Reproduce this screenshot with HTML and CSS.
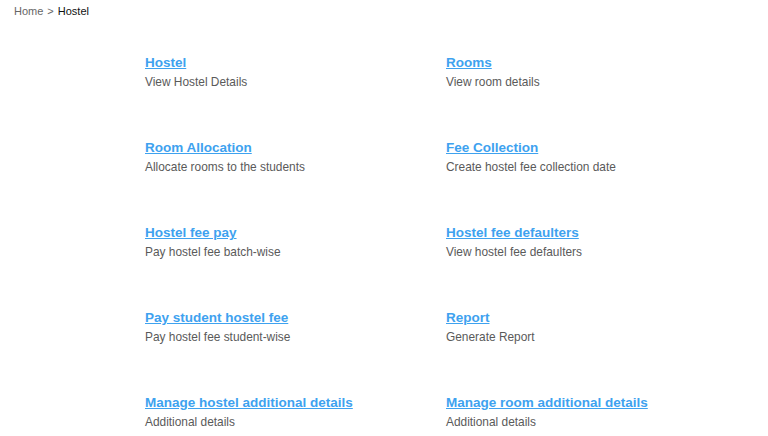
FILE: index.html
```html
<!DOCTYPE html>
<html>
<head>
<meta charset="utf-8">
<link rel="stylesheet" href="styles.css">
</head>
<body>
<div class="breadcrumb"><span class="crumb">Home</span><span class="sep">&gt;</span><span class="current">Hostel</span></div>
<div class="grid">
  <div class="item"><a class="title" href="#">Hostel</a><div class="desc">View Hostel Details</div></div>
  <div class="item"><a class="title" href="#">Rooms</a><div class="desc">View room details</div></div>
  <div class="item"><a class="title" href="#">Room Allocation</a><div class="desc">Allocate rooms to the students</div></div>
  <div class="item"><a class="title" href="#">Fee Collection</a><div class="desc">Create hostel fee collection date</div></div>
  <div class="item"><a class="title" href="#">Hostel fee pay</a><div class="desc">Pay hostel fee batch-wise</div></div>
  <div class="item"><a class="title" href="#">Hostel fee defaulters</a><div class="desc">View hostel fee defaulters</div></div>
  <div class="item"><a class="title" href="#">Pay student hostel fee</a><div class="desc">Pay hostel fee student-wise</div></div>
  <div class="item"><a class="title" href="#">Report</a><div class="desc">Generate Report</div></div>
  <div class="item"><a class="title" href="#">Manage hostel additional details</a><div class="desc">Additional details</div></div>
  <div class="item"><a class="title" href="#">Manage room additional details</a><div class="desc">Additional details</div></div>
</div>
</body>
</html>
```
FILE: styles.css
```css
html, body {
  margin: 0;
  padding: 0;
  background: #ffffff;
  font-family: "Liberation Sans", Arial, sans-serif;
}
.breadcrumb {
  padding: 4px 0 0 14px;
  font-size: 11px;
  line-height: 14px;
  display: flex;
  gap: 4px;
}
.crumb, .sep { color: #666666; }
.current { color: #111111; }
.grid {
  margin-top: 36px;
  padding-left: 145px;
  display: grid;
  grid-template-columns: 301px 301px;
  grid-auto-rows: 85px;
}
.item {
  display: flex;
  flex-direction: column;
  align-items: flex-start;
}
.title {
  font-size: 13.5px;
  line-height: 18px;
  font-weight: bold;
  color: #3ea2ef;
  text-decoration: underline;
}
.desc {
  font-size: 11.9px;
  line-height: 20px;
  color: #5a5a5a;
}
```
